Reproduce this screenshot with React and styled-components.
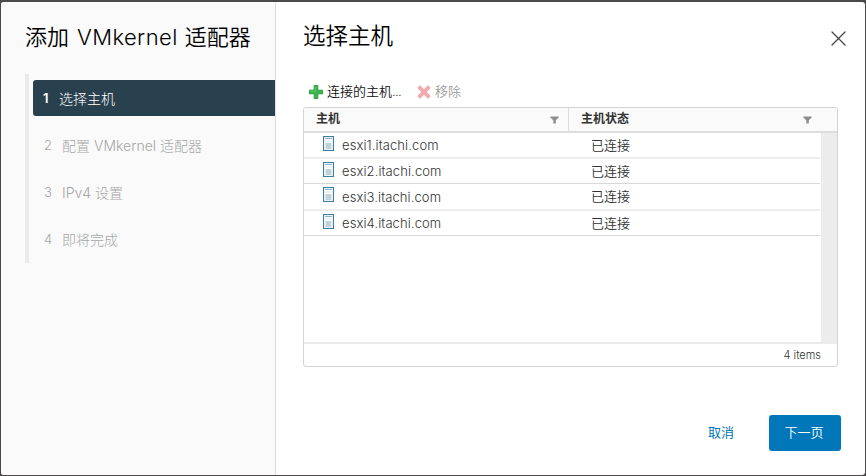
import React from "react";
import styled, { createGlobalStyle } from "styled-components";

const GlobalStyle = createGlobalStyle`
  *, *::before, *::after { box-sizing: border-box; }
  html, body { margin: 0; height: 100%; overflow: hidden; }
  body {
    font-family: Inter, "Noto Sans CJK SC", sans-serif;
    font-weight: 400;
    background: #4b494a;
    color: #000;
  }
  button { font: inherit; border: 0; margin: 0; padding: 0; background: none; cursor: pointer; }
  h1, h2, ol { margin: 0; padding: 0; font-weight: inherit; }
`;

const Backdrop = styled.div`
  height: 476px;
  width: 866px;
  padding: 2px 1px 1px;
  background: #4b494a;
`;

const Dialog = styled.div`
  display: flex;
  height: 473px;
  overflow: hidden;
  border-radius: 3px;
  background: #fff;
`;

const Sidebar = styled.aside`
  flex: none;
  width: 275px;
  padding: 17px 0 0 24px;
  background: #fafafa;
  border-right: 1px solid #ddd;
`;

const Title = styled.h1`
  height: 36px;
  line-height: 36px;
  font-size: 22px;
  font-weight: 350;
  white-space: nowrap;
`;

const Latin = styled.span`
  font-weight: 300;
  letter-spacing: ${(p) => p.$spacing || 0}px;
  margin: 0 ${(p) => p.$after || 0}px 0 ${(p) => p.$before || 0}px;
`;

const Steps = styled.ol`
  list-style: none;
  height: 189px;
  margin-top: 19px;
  padding: 6px 0 0 4px;
  border-left: 4px solid #ebebeb;
`;

const Step = styled.li`
  display: flex;
  align-items: center;
  height: 36px;
  margin-bottom: 11px;
  padding: 0 0 0 ${(p) => (p.$active ? 10 : 11)}px;
  border-radius: 3px 0 0 3px;
  background: ${(p) => (p.$active ? "#29404e" : "transparent")};
  color: ${(p) => (p.$active ? "#fff" : "#a6a6a6")};
  font-size: 14px;
  font-weight: 300;
  white-space: nowrap;
`;

const StepNumber = styled.span`
  width: ${(p) => (p.$active ? 16 : 18)}px;
  font-size: 13px;
  font-weight: ${(p) => (p.$active ? 600 : 300)};
`;

const Main = styled.main`
  flex: 1;
  display: flex;
  flex-direction: column;
  padding: 16px 27px 0 27px;
`;

const Header = styled.header`
  display: flex;
  justify-content: space-between;
  height: 60px;
`;

const PageTitle = styled.h2`
  height: 36px;
  line-height: 36px;
  font-size: 22.5px;
  font-weight: 350;
`;

const CloseButton = styled.button`
  width: 16px;
  height: 16px;
  margin: 12px -9px 0 0;
  line-height: 0;
`;

const Toolbar = styled.div`
  display: flex;
  align-items: flex-start;
  height: 29px;
  padding: 3px 0 0 6px;
`;

const ToolButton = styled.button`
  display: flex;
  align-items: center;
  gap: 4px;
  height: 20px;
  margin-right: 16px;
  font-size: 13px;
  font-weight: 350;
  line-height: 20px;
  color: ${(p) => (p.$disabled ? "#999" : "#111")};
  white-space: nowrap;
  svg { position: relative; top: 1px; }
`;

const Ellipsis = styled.span`
  letter-spacing: -0.7px;
`;

const Table = styled.section`
  display: flex;
  flex-direction: column;
  width: 535px;
  height: 260px;
  overflow: hidden;
  border: 1px solid #d3d3d3;
  border-radius: 3px;
`;

const TableHeader = styled.div`
  display: grid;
  grid-template-columns: 265px 268px;
  flex: none;
  height: 25px;
  border-bottom: 2px solid #ddd;
  background: #fafafa;
`;

const HeaderCell = styled.div`
  display: flex;
  align-items: center;
  justify-content: space-between;
  padding: 0 ${(p) => p.$right}px 4px 12px;
  border-right: ${(p) => (p.$divider ? "1px solid #ddd" : "0")};
  color: #333;
  font-size: 12px;
  font-weight: 700;
  svg { position: relative; top: 2px; }
`;

const TableBody = styled.div`
  flex: 1;
  display: flex;
`;

const Rows = styled.div`
  flex: 1;
`;

const ScrollTrack = styled.div`
  width: 16px;
  margin-left: 1px;
  background: #ececec;
`;

const Row = styled.div`
  display: grid;
  grid-template-columns: 19px 19px 249px 1fr;
  align-items: center;
  height: ${(p) => p.$height}px;
  border-bottom: ${(p) => (p.$soft ? "2px solid #ededed" : "1px solid #d8d8d8")};
  color: #333;
  font-size: 13px;
  font-weight: 350;
  line-height: 20px;
`;

const IconCell = styled.span`
  grid-column: 2;
  height: 19px;
  line-height: 0;
`;

const HostName = styled.span`
  font-size: 13px;
  font-weight: 300;
  letter-spacing: 0.1px;
`;

const HostState = styled.span`
  padding-bottom: 1px;
`;

const TableFooter = styled.div`
  flex: none;
  height: 24px;
  padding: 2px 16px 0 0;
  border-top: 2px solid #ebebeb;
  color: #333;
  font-size: 11px;
  font-weight: 350;
  line-height: 18px;
  text-align: right;
`;

const Actions = styled.footer`
  display: flex;
  justify-content: flex-end;
  align-items: center;
  height: 36px;
  margin: 48px -3px 0 0;
`;

const CancelButton = styled.button`
  height: 36px;
  margin-right: 35px;
  padding-bottom: 3px;
  color: #0077b8;
  font-size: 13px;
`;

const NextButton = styled.button`
  width: 72px;
  height: 36px;
  padding: 0 2px 3px 0;
  border-radius: 3px;
  background: #0077b8;
  color: #fff;
  font-size: 13px;
  font-weight: 350;
`;

const CloseIcon = () => (
  <svg width="16" height="16" viewBox="0 0 16 16">
    <path d="M1 2l13 13M14 2L1 15" stroke="#444" strokeWidth="1.3" strokeLinecap="round" />
  </svg>
);

const PlusIcon = () => (
  <svg width="14" height="14" viewBox="0 0 14 14">
    <path d="M5.2 0.5h3.6v4.7h4.7v3.6H8.8v4.7H5.2V8.8H0.5V5.2h4.7z" fill="#3bb54a" stroke="#27a039" strokeLinejoin="round" />
    <path d="M6.4 1.4v5H1.4" fill="none" stroke="#5cc765" />
  </svg>
);

const RemoveIcon = () => (
  <svg width="14" height="14" viewBox="0 0 14 14">
    <path d="M1.7 1.7l10.6 10.6M12.3 1.7L1.7 12.3" stroke="#f0acac" strokeWidth="4" />
  </svg>
);

const FilterIcon = () => (
  <svg width="9" height="8" viewBox="0 0 9 8">
    <path d="M0.3 0.5h8.4v1L5.8 4.2V7.6H3.3V4.2L0.3 1.5z" fill="#8d8d8d" />
  </svg>
);

const HostIcon = () => (
  <svg width="11" height="15" viewBox="0 0 11 15">
    <rect x="0.5" y="0.5" width="10" height="14" fill="#fff" stroke="#3c7ea3" strokeWidth="1.2" />
    <path d="M2 2.5h7" stroke="#8fb3c8" />
    <path d="M2 5h7" stroke="#dce6ec" />
    <rect x="2.5" y="7" width="6" height="6" fill="#c3d1dc" />
  </svg>
);

const HOSTS = [
  { name: "esxi1.itachi.com", height: 26, soft: true },
  { name: "esxi2.itachi.com", height: 25 },
  { name: "esxi3.itachi.com", height: 27, soft: true },
  { name: "esxi4.itachi.com", height: 25 },
];

export default function App() {
  return (
    <Backdrop>
      <GlobalStyle />
      <Dialog>
        <Sidebar>
          <Title>
            添加<Latin $before={8} $after={7} $spacing={0.4}>VMkernel</Latin>适配器
          </Title>
          <Steps>
            <Step $active><StepNumber $active>1</StepNumber>选择主机</Step>
            <Step>
              <StepNumber>2</StepNumber>配置
              <Latin $before={4} $after={4}>VMkernel</Latin>适配器
            </Step>
            <Step><StepNumber>3</StepNumber><Latin $after={4}>IPv4</Latin>设置</Step>
            <Step><StepNumber>4</StepNumber>即将完成</Step>
          </Steps>
        </Sidebar>
        <Main>
          <Header>
            <PageTitle>选择主机</PageTitle>
            <CloseButton aria-label="关闭"><CloseIcon /></CloseButton>
          </Header>
          <Toolbar>
            <ToolButton><PlusIcon /><span>连接的主机<Ellipsis>...</Ellipsis></span></ToolButton>
            <ToolButton $disabled><RemoveIcon /><span>移除</span></ToolButton>
          </Toolbar>
          <Table>
            <TableHeader>
              <HeaderCell $divider $right={9}>主机<FilterIcon /></HeaderCell>
              <HeaderCell $right={25}>主机状态<FilterIcon /></HeaderCell>
            </TableHeader>
            <TableBody>
              <Rows>
                {HOSTS.map((host) => (
                  <Row key={host.name} $height={host.height} $soft={host.soft}>
                    <IconCell><HostIcon /></IconCell>
                    <HostName>{host.name}</HostName>
                    <HostState>已连接</HostState>
                  </Row>
                ))}
              </Rows>
              <ScrollTrack />
            </TableBody>
            <TableFooter>4 items</TableFooter>
          </Table>
          <Actions>
            <CancelButton>取消</CancelButton>
            <NextButton>下一页</NextButton>
          </Actions>
        </Main>
      </Dialog>
    </Backdrop>
  );
}
